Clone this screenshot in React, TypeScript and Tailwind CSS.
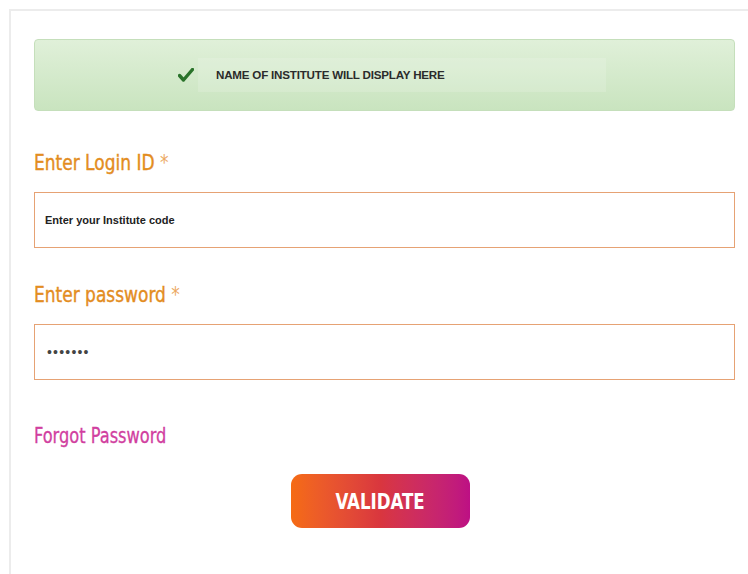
import { useState } from "react";

const narrow = "font-['DejaVu_Sans_Condensed','DejaVu_Sans',sans-serif]";

function CheckMark() {
  return (
    <svg width="16" height="14" viewBox="0 0 16 14" className="shrink-0">
      <path d="M1.5 7.5 L5.5 12 L14.5 1.5" fill="none" stroke="#2a732a" strokeWidth="3.4" strokeLinecap="round" strokeLinejoin="round" />
    </svg>
  );
}

export default function App() {
  const [loginId, setLoginId] = useState("");
  const [password, setPassword] = useState("1234567");

  return (
    <div className="min-h-[574px] w-[748px] bg-white pl-[9px] pt-[9px] font-['Liberation_Sans',sans-serif]">
      <div className="min-h-[565px] border-l-2 border-t-2 border-[#ececec] pb-10 pl-[23px] pr-[13px] pt-[28px]">
        {/* institute banner */}
        <div className="flex h-[72px] items-center rounded-[4px] border border-[#c5dfbb] bg-gradient-to-b from-[#e0f0d9] to-[#c9e4bf] pl-[143px]">
          <CheckMark />
          <div className="ml-[4px] flex h-[34px] w-[408px] items-center bg-white/15 pl-[18px]">
            <span className="text-[11.6px] font-bold tracking-[-0.2px] text-[#2b2b2b]">
              NAME OF INSTITUTE WILL DISPLAY HERE
            </span>
          </div>
        </div>

        <label className={`mt-[37px] block h-[30px] text-[22px] leading-[30px] text-[#e38d1f] [-webkit-text-stroke:0.4px] ${narrow}`}>
          <span className="inline-block origin-left scale-x-[0.86]">
            Enter Login ID <span className="text-[#eca862] [-webkit-text-stroke:0px]">*</span>
          </span>
        </label>
        <input
          value={loginId}
          onChange={(e) => setLoginId(e.target.value)}
          placeholder="Enter your Institute code"
          className="mt-[14px] block h-[56px] w-full border border-[#e6a274] px-[10px] text-[11px] font-bold text-[#222] outline-none placeholder:text-[#222]"
        />

        <label className={`mt-[32px] block h-[30px] text-[22px] leading-[30px] text-[#e38d1f] [-webkit-text-stroke:0.4px] ${narrow}`}>
          <span className="inline-block origin-left scale-x-[0.86]">
            Enter password <span className="text-[#eca862] [-webkit-text-stroke:0px]">*</span>
          </span>
        </label>
        <input
          type="password"
          value={password}
          onChange={(e) => setPassword(e.target.value)}
          className="mt-[14px] block h-[56px] w-full border border-[#e6a274] px-[12px] text-[14px] tracking-[1.2px] text-[#444] outline-none"
        />

        <a href="#" className={`mt-[43px] block w-fit text-[20.5px] leading-[26px] text-[#d13f9f] [-webkit-text-stroke:0.3px] ${narrow}`}>
          <span className="inline-block origin-left scale-x-[0.88]">Forgot Password</span>
        </a>

        <div className="mt-[25px] flex justify-center pr-[8px]">
          <button
            type="button"
            className={`h-[54px] w-[179px] rounded-[11px] bg-gradient-to-r from-[#f56b12] via-[#d9363e] to-[#bd0f84] text-[22px] font-bold text-white ${narrow}`}
          >
            <span className="inline-block scale-x-[0.84]">VALIDATE</span>
          </button>
        </div>
      </div>
    </div>
  );
}
